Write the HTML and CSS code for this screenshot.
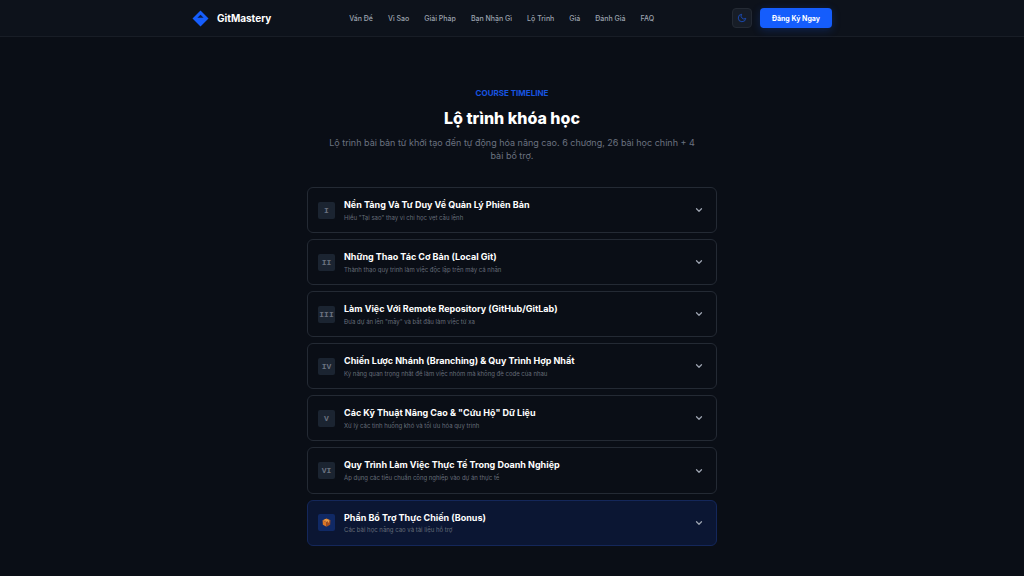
FILE: index.html
```html
<!DOCTYPE html>
<html lang="vi">
<head>
<meta charset="utf-8">
<meta name="viewport" content="width=device-width, initial-scale=1">
<title>GitMastery</title>
<link rel="stylesheet" href="styles.css">
</head>
<body>
<header class="header">
  <div class="header-inner">
    <a class="brand" href="#">
      <svg class="brand-mark" viewBox="0 0 18 18" aria-hidden="true"><path d="M9 0.500 17.500 9 9 17.500.5 9Z" fill="#155dfc"/><path d="M9 5 12.300 8.300H5.700Z" fill="#0d1c45"/></svg>
      <span>GitMastery</span>
    </a>
    <nav class="nav">
      <a href="#problem">Vấn Đề</a>
      <a href="#why">Vì Sao</a>
      <a href="#solution">Giải Pháp</a>
      <a href="#benefits">Bạn Nhận Gì</a>
      <a href="#timeline">Lộ Trình</a>
      <a href="#price">Giá</a>
      <a href="#reviews">Đánh Giá</a>
      <a href="#faq">FAQ</a>
    </nav>
    <div class="actions">
      <button class="theme" type="button" aria-label="Giao diện tối"><svg viewBox="0 0 24 24" aria-hidden="true"><path d="M21 12.800A9 9 0 1 1 11.200 3a7 7 0 0 0 9.800 9.800Z"/></svg></button>
      <button class="signup" type="button">Đăng Ký Ngay</button>
    </div>
  </div>
</header>
<main class="timeline" id="timeline">
  <div class="intro">
    <p class="eyebrow">COURSE TIMELINE</p>
    <h1 class="heading">Lộ trình khóa học</h1>
    <p class="lead">Lộ trình bài bản từ khởi tạo đến tự động hóa nâng cao. 6 chương, 26 bài học chính + 4 bài bổ trợ.</p>
  </div>
  <div class="chapters">
    <button class="chapter" type="button"><span class="numeral">I</span><span class="text"><span class="title">Nền Tảng Và Tư Duy Về Quản Lý Phiên Bản</span><span class="sub">Hiểu "Tại sao" thay vì chỉ học vẹt câu lệnh</span></span><svg class="chevron" viewBox="0 0 24 24" aria-hidden="true"><path d="m6 9 6 6 6-6"/></svg></button>
    <button class="chapter" type="button"><span class="numeral">II</span><span class="text"><span class="title">Những Thao Tác Cơ Bản (Local Git)</span><span class="sub">Thành thạo quy trình làm việc độc lập trên máy cá nhân</span></span><svg class="chevron" viewBox="0 0 24 24" aria-hidden="true"><path d="m6 9 6 6 6-6"/></svg></button>
    <button class="chapter" type="button"><span class="numeral">III</span><span class="text"><span class="title">Làm Việc Với Remote Repository (GitHub/GitLab)</span><span class="sub">Đưa dự án lên "mây" và bắt đầu làm việc từ xa</span></span><svg class="chevron" viewBox="0 0 24 24" aria-hidden="true"><path d="m6 9 6 6 6-6"/></svg></button>
    <button class="chapter" type="button"><span class="numeral">IV</span><span class="text"><span class="title">Chiến Lược Nhánh (Branching) &amp; Quy Trình Hợp Nhất</span><span class="sub">Kỹ năng quan trọng nhất để làm việc nhóm mà không đè code của nhau</span></span><svg class="chevron" viewBox="0 0 24 24" aria-hidden="true"><path d="m6 9 6 6 6-6"/></svg></button>
    <button class="chapter" type="button"><span class="numeral">V</span><span class="text"><span class="title">Các Kỹ Thuật Nâng Cao &amp; "Cứu Hộ" Dữ Liệu</span><span class="sub">Xử lý các tình huống khó và tối ưu hóa quy trình</span></span><svg class="chevron" viewBox="0 0 24 24" aria-hidden="true"><path d="m6 9 6 6 6-6"/></svg></button>
    <button class="chapter" type="button"><span class="numeral">VI</span><span class="text"><span class="title">Quy Trình Làm Việc Thực Tế Trong Doanh Nghiệp</span><span class="sub">Áp dụng các tiêu chuẩn công nghiệp vào dự án thực tế</span></span><svg class="chevron" viewBox="0 0 24 24" aria-hidden="true"><path d="m6 9 6 6 6-6"/></svg></button>
    <button class="chapter bonus" type="button"><span class="numeral"><svg class="box" viewBox="0 0 16 16" aria-hidden="true"><path d="M8 1 15 4 8 7.500 1 4Z" fill="#e8892f"/><path d="M1 4 8 7.500V15.500L1.500 12Z" fill="#dc7626"/><path d="M15 4 8 7.500V15.500L14.500 12Z" fill="#a94e1c"/><path d="m4 2.700 7 3.200v2.600l1.600-.8V5.200L5.700 2Z" fill="#f0ad5c"/></svg></span><span class="text"><span class="title">Phần Bổ Trợ Thực Chiến (Bonus)</span><span class="sub">Các bài học nâng cao và tài liệu hỗ trợ</span></span><svg class="chevron" viewBox="0 0 24 24" aria-hidden="true"><path d="m6 9 6 6 6-6"/></svg></button>
  </div>
</main>
</body>
</html>
```
FILE: styles.css
```css
* { box-sizing: border-box; }
body { margin: 0; background: #0a0e16; color: #fff; font-family: Inter, "Noto Sans", sans-serif; }
a { color: inherit; text-decoration: none; }
button { font: inherit; color: inherit; cursor: pointer; }
h1, p { margin: 0; }

.header { background: #0d121b; border-bottom: 1px solid #181d26; }
.header-inner { display: flex; align-items: center; justify-content: space-between; max-width: 640px; height: 36px; margin: 0 auto; }
.brand { display: flex; align-items: center; gap: 8px; font-size: 10px; font-weight: 700; }
.brand-mark { width: 17px; height: 17px; }
.nav { display: flex; gap: 15px; font-size: 7px; font-weight: 500; color: #9ca3af; }
.actions { display: flex; align-items: center; gap: 8px; }
.theme { display: grid; place-items: center; width: 20px; height: 20px; padding: 0; border: 1px solid #242a34; border-radius: 4px; background: #171d27; }
.theme svg { width: 10px; height: 10px; fill: none; stroke: #1b4fc4; stroke-width: 2; stroke-linejoin: round; }
.signup { height: 20px; padding: 0 12px; border: 0; border-radius: 4px; background: #155dfc; box-shadow: 0 2px 8px #155dfc40; font-size: 7px; font-weight: 700; }

.timeline { max-width: 410px; margin: 0 auto; padding: 50px 0 29px; }
.intro { display: flex; flex-direction: column; align-items: center; text-align: center; }
.eyebrow { color: #1854e0; font-size: 8px; line-height: 12px; font-weight: 700; }
.heading { margin-top: 9px; font-size: 16px; line-height: 20px; font-weight: 800; }
.lead { max-width: 370px; margin-top: 8px; color: #6b7280; font-size: 9px; line-height: 13px; }

.chapters { display: grid; gap: 6px; margin-top: 25px; }
.chapter { display: flex; align-items: center; gap: 9px; width: 100%; padding: 10px 12px 10px 10px; border: 1px solid #242a34; border-radius: 6px; background: #0a0e16; text-align: left; }
.numeral { display: grid; place-items: center; flex: none; width: 17px; height: 17px; border-radius: 2px; background: #1b2431; color: #6b7280; font-family: "Liberation Mono", monospace; font-size: 8px; font-weight: 700; }
.text { display: grid; flex: 1; gap: 1px; }
.title { font-size: 9px; line-height: 1.5; font-weight: 700; }
.sub { color: #666d79; font-size: 6px; line-height: 1.6; }
.chevron { flex: none; width: 10px; height: 10px; fill: none; stroke: #9ca3af; stroke-width: 3; stroke-linecap: round; stroke-linejoin: round; }
.bonus { border-color: #14275a; background: #0b1633; }
.bonus .numeral { background: #102965; }
.box { width: 9px; height: 9px; }
```
